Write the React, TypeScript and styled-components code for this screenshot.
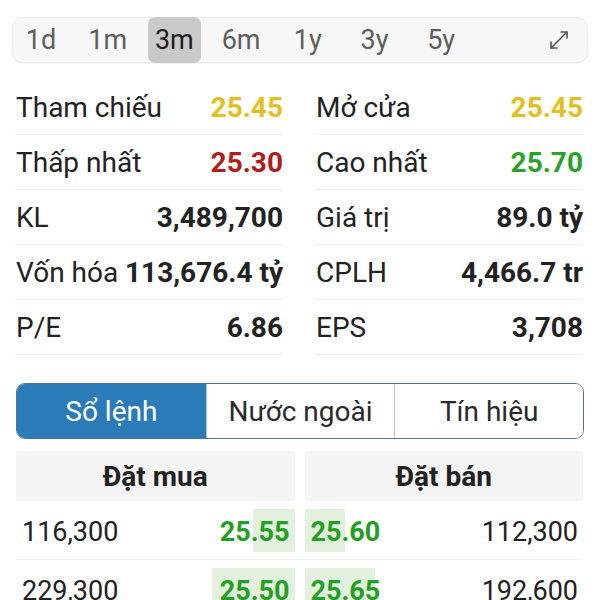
import React from "react";
import styled, { createGlobalStyle } from "styled-components";

const Global = createGlobalStyle`
  html, body { margin: 0; padding: 0; background: #ffffff; }
  body { font-family: Roboto, "Noto Sans", "Liberation Sans", sans-serif; color: #222; overflow: hidden; }
  * { box-sizing: border-box; }
`;

const Page = styled.div`
  width: 600px;
  height: 600px;
  padding: 17px 12px 0 12px;
  overflow: hidden;
`;

const RangeBar = styled.div`
  height: 46px;
  display: flex;
  align-items: stretch;
  gap: 13.7px;
  padding: 0 16px 0 1.5px;
  background: #f7f7f7;
  border: 1px solid #ececec;
  border-radius: 11px;
  box-shadow: 0 1px 1px rgba(0, 0, 0, 0.05);
`;

const RangeItem = styled.div<{ $active?: boolean }>`
  width: 53px;
  display: flex;
  align-items: center;
  justify-content: center;
  font-size: 27px;
  color: ${(p) => (p.$active ? "#1e1e1e" : "#5e5e5e")};
  background: ${(p) => (p.$active ? "#c9c9c9" : "transparent")};
  border-radius: 7px;
  margin: -1px 0;
`;

const ExpandBtn = styled.div`
  margin-left: auto;
  display: flex;
  align-items: center;
  color: #555;
`;

const StatsGrid = styled.div`
  margin: 17px 5px 0 3px;
  display: grid;
  grid-template-columns: 1fr 1fr;
  column-gap: 32px;
`;

const StatRow = styled.div`
  height: 55px;
  display: flex;
  align-items: center;
  justify-content: space-between;
  border-bottom: 1px solid #efefef;
  font-size: 28px;
  white-space: nowrap;
`;

const Label = styled.span`
  padding-left: 1px;
  color: #222;
`;

const Value = styled.span<{ $color?: string }>`
  font-weight: 700;
  color: ${(p) => p.$color || "#222"};
`;

const Segmented = styled.div`
  margin: 28px 4px 0 4px;
  height: 56px;
  display: grid;
  grid-template-columns: 1fr 1fr 1fr;
  border: 1.5px solid #4d7596;
  border-radius: 9px;
  overflow: hidden;
`;

const Segment = styled.div<{ $active?: boolean }>`
  display: flex;
  align-items: center;
  justify-content: center;
  font-size: 28px;
  color: ${(p) => (p.$active ? "#ffffff" : "#2a2a2a")};
  background: ${(p) => (p.$active ? "#2c7bb9" : "#ffffff")};
  & + & {
    border-left: 1px solid #b7c6d3;
  }
`;

const BookHeader = styled.div`
  margin: 12px 5px 0 4px;
  display: grid;
  grid-template-columns: 1fr 1fr;
  column-gap: 10px;
`;

const HeaderCell = styled.div`
  height: 50px;
  display: flex;
  align-items: center;
  justify-content: center;
  background: #f4f4f4;
  font-size: 28px;
  font-weight: 700;
  color: #222;
`;

const BookRow = styled.div`
  margin: 0 5px 0 4px;
  padding: 8px 0 7px;
  display: grid;
  grid-template-columns: 1fr 1fr;
  column-gap: 10px;
  border-bottom: 1px solid #f1f1f1;
`;

const Half = styled.div<{ $side: "buy" | "sell" }>`
  height: 43px;
  display: flex;
  align-items: center;
  justify-content: space-between;
  padding: 3px 5px 0 6px;
  font-size: 27px;
  white-space: nowrap;
`;

const Qty = styled.span`
  color: #222;
`;

const Price = styled.span`
  font-weight: 700;
  color: #23a023;
`;

const ranges = ["1d", "1m", "3m", "6m", "1y", "3y", "5y"];

const stats: [string, string, string?][][] = [
  [["Tham chiếu", "25.45", "#e1c020"], ["Mở cửa", "25.45", "#e1c020"]],
  [["Thấp nhất", "25.30", "#b31c1c"], ["Cao nhất", "25.70", "#27a327"]],
  [["KL", "3,489,700"], ["Giá trị", "89.0 tỷ"]],
  [["Vốn hóa", "113,676.4 tỷ"], ["CPLH", "4,466.7 tr"]],
  [["P/E", "6.86"], ["EPS", "3,708"]],
];

const book = [
  { bq: "116,300", bp: "25.55", bw: 42, sp: "25.60", sw: 40, sq: "112,300" },
  { bq: "229,300", bp: "25.50", bw: 83, sp: "25.65", sw: 70, sq: "192,600" },
];

const BAR = "#e2f0dd";

export default function App() {
  return (
    <>
      <Global />
      <Page>
        <RangeBar>
          {ranges.map((r) => (
            <RangeItem key={r} $active={r === "3m"}>
              {r}
            </RangeItem>
          ))}
          <ExpandBtn>
            <svg width="24" height="24" viewBox="0 0 24 24" fill="none" stroke="currentColor" strokeWidth="1.6" strokeLinecap="round" strokeLinejoin="round">
              <path d="M10 20H4v-6" />
              <path d="M14 4h6v6" />
              <path d="M20 4 4 20" />
            </svg>
          </ExpandBtn>
        </RangeBar>

        <StatsGrid>
          {stats.map((row) =>
            row.map(([l, v, c]) => (
              <StatRow key={l}>
                <Label>{l}</Label>
                <Value $color={c}>{v}</Value>
              </StatRow>
            ))
          )}
        </StatsGrid>

        <Segmented>
          <Segment $active>Sổ lệnh</Segment>
          <Segment>Nước ngoài</Segment>
          <Segment>Tín hiệu</Segment>
        </Segmented>

        <BookHeader>
          <HeaderCell>Đặt mua</HeaderCell>
          <HeaderCell>Đặt bán</HeaderCell>
        </BookHeader>

        {book.map((b) => (
          <BookRow key={b.bq}>
            <Half
              $side="buy"
              style={{ background: `linear-gradient(to left, ${BAR} ${b.bw}px, transparent ${b.bw}px)` }}
            >
              <Qty>{b.bq}</Qty>
              <Price>{b.bp}</Price>
            </Half>
            <Half
              $side="sell"
              style={{ background: `linear-gradient(to right, ${BAR} ${b.sw}px, transparent ${b.sw}px)` }}
            >
              <Price>{b.sp}</Price>
              <Qty>{b.sq}</Qty>
            </Half>
          </BookRow>
        ))}
      </Page>
    </>
  );
}
